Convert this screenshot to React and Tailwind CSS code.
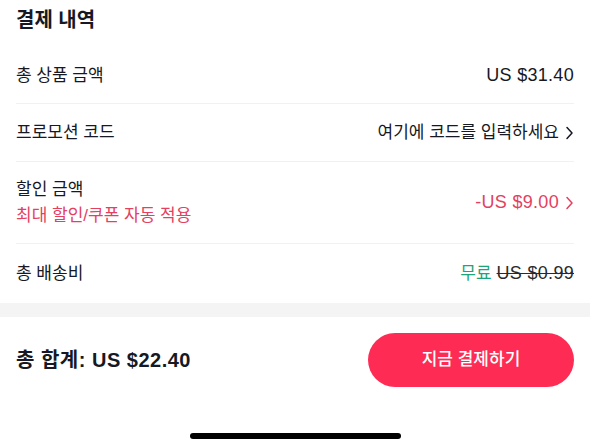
import React from "react";

const Chevron = ({ color = "#161823" }) => (
  <svg width="9" height="14" viewBox="0 0 9 14" className="ml-[6px] shrink-0">
    <polyline points="2,1.5 7,7 2,12.5" fill="none" stroke={color} strokeWidth="1.5" strokeLinecap="round" strokeLinejoin="round" />
  </svg>
);

export default function App() {
  return (
    <div
      className="w-[590px] h-[443px] bg-white overflow-hidden flex flex-col text-[#161823]"
      style={{ fontFamily: '"Liberation Sans", "Noto Sans CJK KR", sans-serif' }}
    >
      <div className="px-4">
        <div className="pt-2 pb-4 text-[20px] leading-[24px] font-bold">결제 내역</div>
        <div className="h-[56px] flex items-center justify-between border-b border-[#f1f1f2] text-[17px]">
          <span>총 상품 금액</span>
          <span className="text-[18px] tracking-[0.3px]">US $31.40</span>
        </div>
        <div className="h-[58px] flex items-center justify-between border-b border-[#f1f1f2] text-[17px]">
          <span>프로모션 코드</span>
          <span className="flex items-center">
            여기에 코드를 입력하세요
            <Chevron />
          </span>
        </div>
        <div className="h-[82px] flex items-center justify-between border-b border-[#f1f1f2] text-[17px]">
          <div className="flex flex-col">
            <span className="leading-[26px]">할인 금액</span>
            <span className="leading-[26px] text-[#e4405f]">최대 할인/쿠폰 자동 적용</span>
          </div>
          <span className="flex items-center text-[#e4405f] text-[18px] tracking-[0.3px]">
            -US $9.00
            <Chevron color="#e4405f" />
          </span>
        </div>
        <div className="h-[59px] flex items-center justify-between text-[17px]">
          <span>총 배송비</span>
          <span className="flex items-center gap-[5px]">
            <span className="text-[#1fa47a]">무료</span>
            <span className="line-through text-[#2a2a2a] text-[18px] tracking-[0.3px]">US $0.99</span>
          </span>
        </div>
      </div>
      <div className="h-[14px] bg-[#f4f4f4]" />
      <div className="px-4 pt-4 flex items-center justify-between">
        <span className="text-[20px] font-bold tracking-[0.5px]">총 합계: US $22.40</span>
        <button className="w-[206px] h-[54px] rounded-full bg-[#fe2c55] text-white text-[17px] font-medium flex items-center justify-center">
          지금 결제하기
        </button>
      </div>
      <div className="mt-[46px] flex justify-center">
        <div className="w-[211px] h-[6px] rounded-full bg-black" />
      </div>
    </div>
  );
}
